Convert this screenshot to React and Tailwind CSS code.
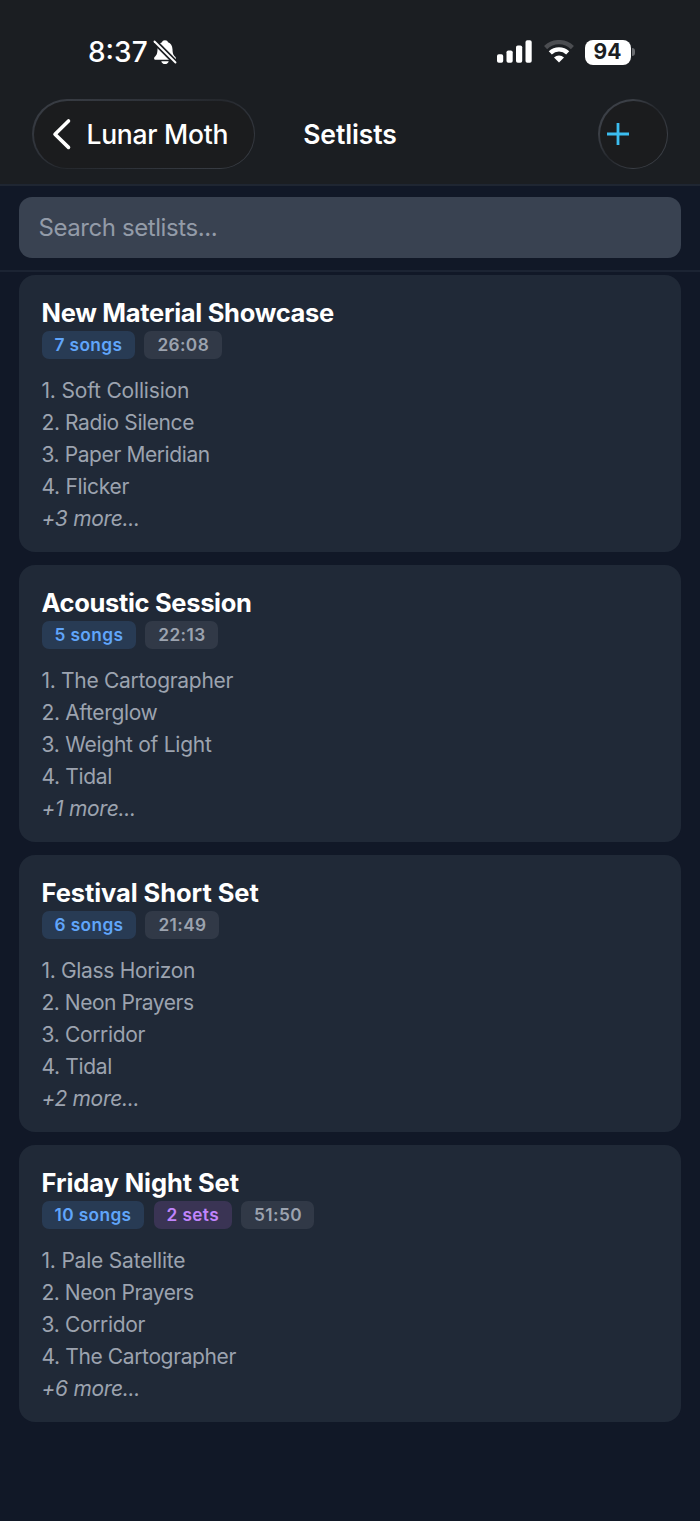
import React from 'react';

const setlists = [
  {
    title: 'New Material Showcase', titleClass: 'tracking-[-0.3px]', songs: '7 songs', time: '26:08', more: '+3 more...',
    items: [['1. Soft Collision', 'tracking-[-0.18px]'], ['2. Radio Silence', 'tracking-[-0.4px]'], ['3. Paper Meridian', 'tracking-[-0.41px]'], ['4. Flicker', 'tracking-[-0.3px]']],
  },
  {
    title: 'Acoustic Session', titleClass: 'tracking-[-0.34px]', songs: '5 songs', time: '22:13', more: '+1 more...',
    items: [['1. The Cartographer', 'tracking-[-0.3px]'], ['2. Afterglow', 'tracking-[-0.35px]'], ['3. Weight of Light', 'tracking-[-0.27px]'], ['4. Tidal', 'tracking-[-0.35px]']],
  },
  {
    title: 'Festival Short Set', titleClass: 'tracking-[-0.07px]', songs: '6 songs', time: '21:49', more: '+2 more...',
    items: [['1. Glass Horizon', 'tracking-[-0.33px]'], ['2. Neon Prayers', 'tracking-[-0.47px]'], ['3. Corridor', 'tracking-[-0.35px]'], ['4. Tidal', 'tracking-[-0.35px]']],
  },
  {
    title: 'Friday Night Set', titleClass: 'tracking-[-0.08px]', songs: '10 songs', sets: '2 sets', time: '51:50', more: '+6 more...',
    items: [['1. Pale Satellite', 'tracking-[-0.2px]'], ['2. Neon Prayers', 'tracking-[-0.47px]'], ['3. Corridor', 'tracking-[-0.35px]'], ['4. The Cartographer', 'tracking-[-0.37px]']],
  },
];

function BellOff() {
  return (
    <svg className="ml-[5.500px]" width="24" height="26" viewBox="0 0 24 26" fill="none">
      <path d="M12 1.2c-1.7 0-2.7.9-3 2.1-2.8 1-4.3 3.4-4.500 7-.1 4.300-.9 5.700-2.400 7.300-.8.9-1 1.200-1 1.800 0 .8.600 1.300 1.600 1.300h18.600c1 0 1.600-.5 1.600-1.300 0-.6-.2-.9-1-1.800-1.500-1.600-2.300-3-2.400-7.300-.2-3.600-1.700-6-4.500-7-.3-1.200-1.300-2.100-3-2.100Z" fill="#fff" />
      <path d="M8.300 22.200h7.400c-.4 1.800-1.800 2.900-3.700 2.900s-3.300-1.100-3.700-2.900Z" fill="#fff" />
      <path d="M1.500 2.500 22.500 23.500" stroke="#1b1e22" strokeWidth="5.400" />
      <path d="M1.500 2.500 22.500 23.500" stroke="#fff" strokeWidth="1.900" strokeLinecap="round" />
    </svg>
  );
}

function Signal() {
  return (
    <svg width="36" height="24" viewBox="0 0 36 24" fill="#fff">
      <rect x="0" y="14.300" width="6.200" height="8.500" rx="1.800" />
      <rect x="9.500" y="10.500" width="6.200" height="12.300" rx="1.800" />
      <rect x="19" y="5.500" width="6.200" height="17.300" rx="1.800" />
      <rect x="28.500" y="0.300" width="6.200" height="22.500" rx="1.800" />
    </svg>
  );
}

function Wifi() {
  return (
    <svg width="32" height="24" viewBox="0 0 32 24" fill="none">
      <path d="M2.600 7.600a19.200 19.200 0 0 1 26.800 0" stroke="#4b4d51" strokeWidth="4.400" />
      <path d="M7.300 12.900a12.400 12.400 0 0 1 17.400 0" stroke="#fff" strokeWidth="4.400" />
      <path d="M11 17.400a7.200 7.200 0 0 1 10 0L16 22.400Z" fill="#fff" />
    </svg>
  );
}

function Chip({ children, tone }) {
  const tones = {
    blue: 'bg-[#283b54] text-[#60a5fa]',
    purple: 'bg-[#3a3454] text-[#c084fc]',
    gray: 'bg-[#313947] text-[#9ca3af]',
  };
  return (
    <span className={`flex h-[28px] items-center rounded-[7px] pr-[12.500px] pl-[13px] text-[17.300px] font-semibold tracking-[0.380px] ${tones[tone]}`}>
      {children}
    </span>
  );
}

function Card({ data }) {
  return (
    <section className="h-[277px] rounded-[16px] bg-[#202937] px-[22.500px] pt-[20px]">
      <h2 className={`h-[36px] text-[25.500px] leading-[36px] font-[650] text-white ${data.titleClass}`}>{data.title}</h2>
      <div className="flex gap-[9.500px]">
        <Chip tone="blue">{data.songs}</Chip>
        {data.sets && <Chip tone="purple">{data.sets}</Chip>}
        <Chip tone="gray">{data.time}</Chip>
      </div>
      <ul className="mt-[16px] text-[21px] leading-[32px] text-[#9ca3af]">
        {data.items.map(([text, tracking]) => <li key={text} className={tracking}>{text}</li>)}
        <li className="tracking-[-0.3px] italic">{data.more}</li>
      </ul>
    </section>
  );
}

export default function App() {
  return (
    <div className="flex h-[1521px] w-[700px] flex-col overflow-hidden bg-[#111827] font-['Inter',sans-serif]">
      <header className="flex h-[186px] flex-col border-b-2 border-[#1f2632] bg-[#1b1e22]">
        <div className="flex h-[99px] items-start justify-between pr-[65px] pl-[88px] pt-[34px]">
          <div className="flex h-[36px] items-center text-white">
            <span className="text-[28px] leading-[36px] font-medium">8:37</span>
            <BellOff />
          </div>
          <div className="flex h-[36px] items-center">
            <Signal />
            <span className="ml-[10px] flex"><Wifi /></span>
            <span className="ml-[10px] flex h-[25px] w-[46px] items-center justify-center rounded-[8px] bg-white text-[21px] font-bold text-[#1b1e22]">94</span>
            <span className="ml-[1.500px] h-[8px] w-[3px] rounded-r-[3px] bg-[#6a6c70]" />
          </div>
        </div>
        <nav className="grid grid-cols-[223px_1fr_223px] items-center px-[32px]">
          <button className="flex h-[70px] items-center rounded-full bg-linear-[155deg,#3b3f46,#2d3138_35%,#25282d_50%,#2d3138_65%,#3b3f46] p-[1.500px] text-white">
            <span className="flex h-full w-full items-center rounded-full bg-[#1b1c1e] pl-[18px]">
              <svg width="20" height="32" viewBox="0 0 20 32" fill="none" stroke="#fff" strokeWidth="3.600" strokeLinecap="round" strokeLinejoin="round">
                <path d="M16.500 3 3 16.200 16.500 29.400" />
              </svg>
              <span className="ml-[15px] pt-px text-[26.500px] font-medium tracking-[-0.280px]">Lunar Moth</span>
            </span>
          </button>
          <h1 className="pt-[2px] text-center text-[26.500px] font-semibold tracking-[-0.100px] text-white">Setlists</h1>
          <button className="h-[70px] w-[70px] justify-self-end rounded-full bg-linear-[135deg,#3b3f46,#3b3f46_25%,#25282d_50%,#3b3f46_75%,#3b3f46] p-[1.500px]">
            <span className="flex h-full w-full items-center rounded-full bg-[#1b1c1e] pl-[6px]">
              <svg width="24" height="24" viewBox="0 0 24 24" stroke="#3bbdf0" strokeWidth="2.800">
                <path d="M12 1v22M1 12h22" />
              </svg>
            </span>
          </button>
        </nav>
      </header>
      <div className="h-[86px] border-b-2 border-[#1c2433] px-[19px] pt-[11px]">
        <div className="flex h-[61px] items-center rounded-[13px] bg-[#394251] px-[19.500px] text-[24px] tracking-[-0.420px] text-[#939ba8]">Search setlists...</div>
      </div>
      <main className="flex flex-col gap-[13px] px-[19px] pt-[3px]">
        {setlists.map((s) => <Card key={s.title} data={s} />)}
      </main>
    </div>
  );
}
